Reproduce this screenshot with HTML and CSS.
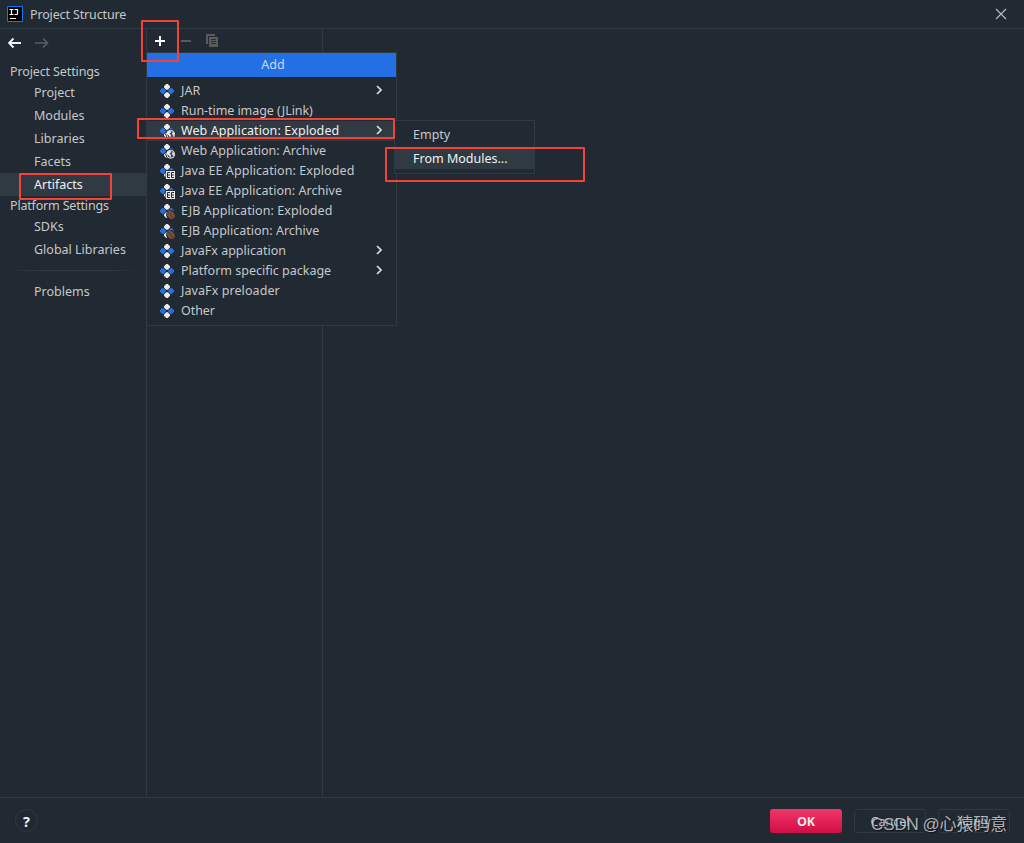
FILE: index.html
```html
<!DOCTYPE html>
<html lang="en">
<head>
<meta charset="utf-8">
<title>Project Structure</title>
<link rel="stylesheet" href="styles.css">
</head>
<body>
<svg class="defs" width="0" height="0">
  <defs>
    <g id="artifact">
      <path class="white" d="M6.200 0h1.600L10 2.200v1.200L7.800 5.800H6.200L4 3.400V2.200zM6.200 8.200h1.600L10 10.600v1.200L7.800 14H6.200L4 11.800v-1.200z"/>
      <path class="blue" d="M2.200 4h1.200l2.400 2.200v1.600L3.400 10H2.200L0 7.800V6.200zM10.600 4h1.200L14 6.200v1.600L11.800 10h-1.200L8.200 7.800V6.200z"/>
    </g>
    <g id="globe">
      <circle cx="10.700" cy="10.300" r="5.300" class="cut"/>
      <circle cx="10.700" cy="10.300" r="4" fill="#414a52" stroke="#e8e8e8" stroke-width="1"/>
      <path class="white" d="M7 8l3-1.500 1.300 1.500-1.800 1.500L11 11l-.5 3-1.500-2.500L6.500 10zM12 8l2 1v3l-1.500-1z"/>
    </g>
    <g id="ee">
      <path class="cut" d="M5.500 6H16v9H5.500z"/>
      <path class="white" d="M6 7h9v8H6z"/>
      <path d="M10 8.500H7.500v5H10M7.500 11H10M14 8.500h-2.500v5H14M11.500 11H14" fill="none" stroke="#222931" stroke-width="1"/>
    </g>
    <g id="bean">
      <circle cx="10.800" cy="10.800" r="4.800" class="cut"/>
      <ellipse cx="10.800" cy="10.800" rx="4.800" ry="3.400" transform="rotate(45 10.800 10.800)" fill="#765039"/>
      <path d="M7.500 8q3 .5 3.300 2.800t3.300 3.200" fill="none" stroke="#4a382d" stroke-width=".9"/>
    </g>
    <path id="chev" d="M1 1l4 4-4 4" fill="none" stroke="#dde0e2" stroke-width="1.600"/>
  </defs>
</svg>
<div class="window">
  <header class="titlebar">
    <svg class="logo" width="16" height="16" viewBox="0 0 16 16"><path d="M.5.5h15v15H.5z" fill="#000" stroke="#0b7bf4"/><path d="M2.500 3.500h4M4.500 3.500v5M2.500 8.500h4M7.500 3.500h3v4q0 1-1 1H7.500M3 12.500h6" fill="none" stroke="#fff" stroke-width="1.200"/></svg>
    <span class="title">Project Structure</span>
    <svg class="close" width="12" height="12" viewBox="0 0 12 12"><path d="M1 1l10 10M11 1L1 11" stroke="#b9bdc0" stroke-width="1.100"/></svg>
  </header>
  <main class="body">
    <nav class="sidebar">
      <div class="history">
        <svg width="14" height="12" viewBox="0 0 14 12"><path d="M13 6H1.500M5.500 1.500L1 6l4.500 4.500" fill="none" stroke="#f0f1f2" stroke-width="1.900"/></svg>
        <svg width="14" height="12" viewBox="0 0 14 12"><path d="M0 6h12M8 1.500L12.500 6 8 10.500" fill="none" stroke="#5b5e60" stroke-width="1.700"/></svg>
      </div>
      <div class="group">Project Settings</div>
      <div class="entry">Project</div>
      <div class="entry">Modules</div>
      <div class="entry">Libraries</div>
      <div class="entry">Facets</div>
      <div class="entry selected">Artifacts</div>
      <div class="group platform">Platform Settings</div>
      <div class="entry">SDKs</div>
      <div class="entry">Global Libraries</div>
      <div class="rule"></div>
      <div class="entry">Problems</div>
    </nav>
    <section class="list">
      <div class="toolbar">
        <svg width="12" height="12" viewBox="0 0 12 12"><path d="M6 1v10M1 6h10" stroke="#fff" stroke-width="2"/></svg>
        <svg width="12" height="12" viewBox="0 0 12 12"><path d="M1 6h10" stroke="#5b5b5b" stroke-width="2"/></svg>
        <svg class="copy" width="12" height="13" viewBox="0 0 12 13"><path d="M0 0h9v2H2v8H0z" fill="#5b5b5b"/><path d="M3 3h9v10H3z" fill="#5b5b5b"/><path d="M5 5.500h5M5 7.500h5M5 9.500h5" stroke="#222931" stroke-width=".9"/></svg>
      </div>
    </section>
    <section class="detail"></section>
  </main>
  <footer class="footer">
    <div class="help">?</div>
    <div class="btn ok">OK</div>
    <div class="btn">Cancel</div>
    <div class="btn">Apply</div>
  </footer>

  <div class="menu">
    <div class="menu-title">Add</div>
    <div class="items">
      <div class="item"><svg class="ic" viewBox="0 0 16 16"><use href="#artifact"/></svg><span>JAR</span><svg class="chev" viewBox="0 0 6 10"><use href="#chev"/></svg></div>
      <div class="item"><svg class="ic" viewBox="0 0 16 16"><use href="#artifact"/></svg><span class="tight">Run-time image (JLink)</span></div>
      <div class="item active"><svg class="ic" viewBox="0 0 16 16"><use href="#artifact"/><use href="#globe"/></svg><span class="wide">Web Application: Exploded</span><svg class="chev" viewBox="0 0 6 10"><use href="#chev"/></svg></div>
      <div class="item"><svg class="ic" viewBox="0 0 16 16"><use href="#artifact"/><use href="#globe"/></svg><span>Web Application: Archive</span></div>
      <div class="item"><svg class="ic" viewBox="0 0 16 16"><use href="#artifact"/><use href="#ee"/></svg><span class="wide">Java EE Application: Exploded</span></div>
      <div class="item"><svg class="ic" viewBox="0 0 16 16"><use href="#artifact"/><use href="#ee"/></svg><span class="slight">Java EE Application: Archive</span></div>
      <div class="item"><svg class="ic" viewBox="0 0 16 16"><use href="#artifact"/><use href="#bean"/></svg><span class="wide">EJB Application: Exploded</span></div>
      <div class="item"><svg class="ic" viewBox="0 0 16 16"><use href="#artifact"/><use href="#bean"/></svg><span>EJB Application: Archive</span></div>
      <div class="item"><svg class="ic" viewBox="0 0 16 16"><use href="#artifact"/></svg><span>JavaFx application</span><svg class="chev" viewBox="0 0 6 10"><use href="#chev"/></svg></div>
      <div class="item"><svg class="ic" viewBox="0 0 16 16"><use href="#artifact"/></svg><span>Platform specific package</span><svg class="chev" viewBox="0 0 6 10"><use href="#chev"/></svg></div>
      <div class="item"><svg class="ic" viewBox="0 0 16 16"><use href="#artifact"/></svg><span class="wide">JavaFx preloader</span></div>
      <div class="item"><svg class="ic" viewBox="0 0 16 16"><use href="#artifact"/></svg><span class="tight">Other</span></div>
    </div>
  </div>
  <div class="submenu">
    <div class="subitem">Empty</div>
    <div class="subitem active">From Modules...</div>
  </div>
  <div class="mark mark-add"></div>
  <div class="mark mark-artifacts"></div>
  <div class="mark mark-web"></div>
  <div class="mark mark-modules"></div>
  <div class="watermark">CSDN @心猿码意</div>
</div>
</body>
</html>
```
FILE: styles.css
```css
* { box-sizing: border-box; }
body { margin: 0; background: #212932; }
.defs { position: absolute; }
.window {
  position: relative; width: 1024px; height: 843px; overflow: hidden;
  display: flex; flex-direction: column; background: #212932; color: #c5c8ca;
  font: 12.5px/20px "Noto Sans", sans-serif; white-space: nowrap;
}
.white { fill: #ececec; }
.blue { fill: #2470e0; }
.cut { fill: #212932; }
.titlebar { height: 29px; flex: none; display: flex; align-items: center; padding: 0 17px 0 7px; border-bottom: 1px solid #2f3a43; }
.title { margin-left: 7px; padding-top: 2px; letter-spacing: -.14px; }
.close { margin-left: auto; }
.body { flex: 1; display: flex; min-height: 0; }
.sidebar { width: 147px; border-right: 1px solid #2f3a43; }
.history { height: 33px; padding: 8px 0 0 8px; display: flex; gap: 13px; }
.group { height: 19px; line-height: 19px; padding-left: 10px; letter-spacing: -.12px; }
.platform { letter-spacing: -.18px; }
.entry { height: 23px; line-height: 23px; padding-left: 34px; }
.selected { background: #303a43; color: #f0f1f2; }
.rule { height: 1px; margin: 9px 8px; background: linear-gradient(90deg, transparent, #2f3a43 20%, #2f3a43 80%, transparent); }
.list { width: 176px; border-right: 1px solid #2f3a43; }
.toolbar { display: flex; gap: 14px; padding: 6px 0 0 7px; }
.copy { margin-top: -1px; }
.detail { flex: 1; }
.footer { height: 46px; flex: none; border-top: 1px solid #2f3a43; display: flex; align-items: center; gap: 12px; padding: 0 14px 0 15px; }
.help { width: 23px; height: 23px; border: 1px solid #2f3a43; border-radius: 50%; text-align: center; line-height: 22px; font-size: 14.5px; font-weight: 700; color: #f2f2f2; margin-right: auto; }
.btn { width: 72px; height: 24px; border: 1px solid #303a43; border-radius: 3px; text-align: center; line-height: 24px; }
.ok { border: 0; line-height: 25px; color: #f5e6ea; font-family: "Open Sans", sans-serif; font-weight: 700; background: linear-gradient(#f1366a, #d10e43); }
.menu { position: absolute; left: 146px; top: 52px; width: 251px; height: 274px; background: #212932; border: 1px solid #2f3a43; }
.menu-title { height: 24px; line-height: 23px; background: #2270e4; text-align: center; padding-left: 3px; color: #c9d9f2; }
.items { padding-top: 4px; }
.item { height: 20px; line-height: 18px; display: flex; align-items: center; padding: 0 14px 0 13px; }
.wide { letter-spacing: .08px; }
.slight { letter-spacing: .04px; }
.tight { letter-spacing: -.06px; }
.ic { width: 16px; height: 16px; margin: 2px 5px 0 0; }
.chev { width: 6px; height: 10px; margin: 0 0 2px auto; }
.active { background: #303a43; color: #f0f1f2; }
.submenu { position: absolute; left: 394px; top: 120px; width: 141px; height: 54px; border: 1px solid #2f3a43; background: #212932; padding-top: 4px; }
.subitem { height: 20px; line-height: 19px; padding-left: 18px; margin-bottom: 4px; }
.mark { position: absolute; border: 2px solid #f44336; border-radius: 1px; }
.mark-add { left: 141px; top: 20px; width: 38px; height: 42px; }
.mark-artifacts { left: 19px; top: 173px; width: 93px; height: 27px; }
.mark-web { left: 137px; top: 118px; width: 258px; height: 21px; }
.mark-modules { left: 385px; top: 147px; width: 200px; height: 35px; }
.watermark { position: absolute; left: 871px; top: 813px; font: 17px/24px "Liberation Sans", "Noto Sans CJK SC", sans-serif; letter-spacing: -.1px; word-spacing: -1px; color: rgba(215,217,219,.8); text-shadow: 1px 1px 1px #11151a; }
```
